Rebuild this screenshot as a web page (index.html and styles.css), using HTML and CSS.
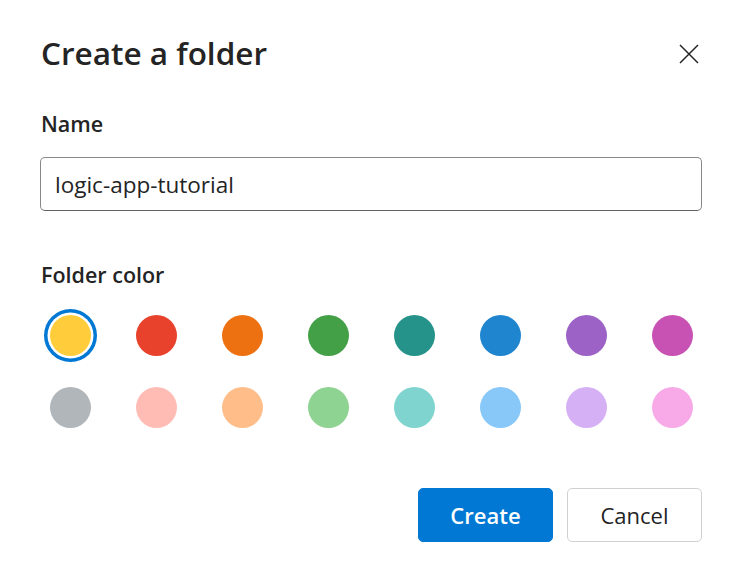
FILE: index.html
```html
<!DOCTYPE html>
<html lang="en">
<head>
<meta charset="utf-8">
<title>Create a folder</title>
<link rel="stylesheet" href="styles.css">
</head>
<body>
<div class="dialog">
  <div class="header">
    <h1 class="title">Create a folder</h1>
    <button class="close" aria-label="Close">
      <svg width="20" height="20" viewBox="0 0 20 20"><path d="M1 1 L19 19 M19 1 L1 19" stroke="#242424" stroke-width="1.5" fill="none"/></svg>
    </button>
  </div>
  <label class="label name-label" for="name">Name</label>
  <input id="name" class="input" type="text" value="logic-app-tutorial">
  <div class="label color-label">Folder color</div>
  <div class="swatches">
    <div class="row">
      <span class="swatch selected"><span class="dot c-yellow"></span></span>
      <span class="swatch"><span class="dot c-red"></span></span>
      <span class="swatch"><span class="dot c-orange"></span></span>
      <span class="swatch"><span class="dot c-green"></span></span>
      <span class="swatch"><span class="dot c-teal"></span></span>
      <span class="swatch"><span class="dot c-blue"></span></span>
      <span class="swatch"><span class="dot c-purple"></span></span>
      <span class="swatch"><span class="dot c-magenta"></span></span>
    </div>
    <div class="row">
      <span class="swatch"><span class="dot c-gray"></span></span>
      <span class="swatch"><span class="dot c-lred"></span></span>
      <span class="swatch"><span class="dot c-lorange"></span></span>
      <span class="swatch"><span class="dot c-lgreen"></span></span>
      <span class="swatch"><span class="dot c-lteal"></span></span>
      <span class="swatch"><span class="dot c-lblue"></span></span>
      <span class="swatch"><span class="dot c-lpurple"></span></span>
      <span class="swatch"><span class="dot c-lpink"></span></span>
    </div>
  </div>
  <div class="actions">
    <button class="btn primary">Create</button>
    <button class="btn secondary">Cancel</button>
  </div>
</div>
</body>
</html>
```
FILE: styles.css
```css
html, body {
  margin: 0;
  padding: 0;
  background: #ffffff;
}
body {
  font-family: "Open Sans", "Noto Sans", sans-serif;
  color: #242424;
}
.dialog {
  width: 742px;
  height: 577px;
  box-sizing: border-box;
  padding: 33px 40px 0 40px;
  display: flex;
  flex-direction: column;
}
.header {
  display: flex;
  justify-content: space-between;
  align-items: center;
  height: 40px;
}
.title {
  margin: 0 0 0 1px;
  font-size: 31.5px;
  line-height: 40px;
  font-weight: 600;
  letter-spacing: 0;
}
.close {
  border: 0;
  background: none;
  padding: 0;
  width: 20px;
  height: 20px;
  margin-right: 3px;
  margin-top: 2px;
  display: flex;
}
.label {
  font-size: 21.5px;
  line-height: 28px;
  font-weight: 600;
  margin-left: 1px;
}
.name-label {
  margin-top: 37px;
}
.input {
  margin-top: 19px;
  height: 54px;
  box-sizing: border-box;
  border: 1px solid #8a8886;
  border-bottom-color: #616161;
  border-radius: 5px;
  padding: 0 14px;
  font-family: inherit;
  font-size: 22.5px;
  color: #242424;
  outline: none;
}
.color-label {
  margin-top: 50px;
}
.swatches {
  margin-top: 16px;
  display: flex;
  flex-direction: column;
  gap: 12px;
}
.row {
  display: flex;
  justify-content: space-between;
}
.swatch {
  width: 60px;
  height: 60px;
  display: flex;
  align-items: center;
  justify-content: center;
}
.dot {
  width: 41px;
  height: 41px;
  border-radius: 50%;
}
.selected .dot {
  box-shadow: 0 0 0 2.5px #ffffff, 0 0 0 6px #0078d4;
}
.c-yellow { background: #ffcd3c; }
.c-red { background: #e8412c; }
.c-orange { background: #ee7111; }
.c-green { background: #43a047; }
.c-teal { background: #26938b; }
.c-blue { background: #1f85cf; }
.c-purple { background: #9c62c6; }
.c-magenta { background: #c852b3; }
.c-gray { background: #b0b6b9; }
.c-lred { background: #ffbcb5; }
.c-lorange { background: #ffbe89; }
.c-lgreen { background: #8ed391; }
.c-lteal { background: #7fd4cf; }
.c-lblue { background: #88c8f8; }
.c-lpurple { background: #d5b0f5; }
.c-lpink { background: #f7aae7; }
.actions {
  margin-top: 51px;
  display: flex;
  justify-content: flex-end;
  gap: 14px;
}
.btn {
  width: 135px;
  height: 54px;
  box-sizing: border-box;
  border-radius: 5px;
  font-family: inherit;
  font-size: 22px;
  cursor: pointer;
}
.primary {
  background: #0078d4;
  border: 1px solid #0078d4;
  color: #ffffff;
  font-weight: 600;
}
.secondary {
  background: #ffffff;
  border: 1px solid #d1d1d1;
  color: #242424;
  font-weight: 400;
}
```
